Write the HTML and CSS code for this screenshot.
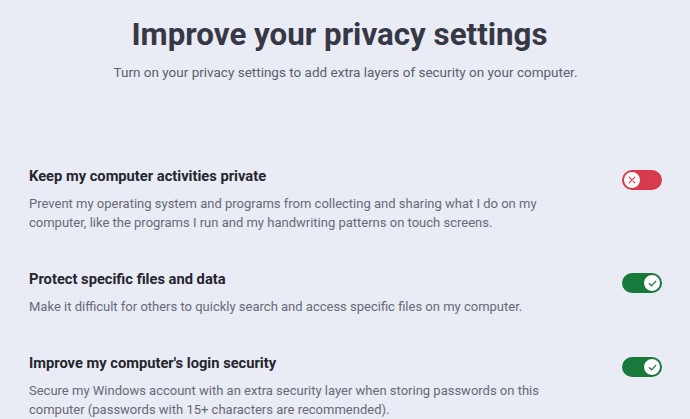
FILE: index.html
```html
<!DOCTYPE html>
<html lang="en">
<head>
<meta charset="utf-8">
<title>Privacy settings</title>
<link rel="stylesheet" href="styles.css">
</head>
<body>
<main class="page">
  <header class="intro">
    <h1 class="title">Improve your privacy settings</h1>
    <p class="subtitle">Turn on your privacy settings to add extra layers of security on your computer.</p>
  </header>
  <section class="settings">
    <div class="setting">
      <div class="setting-text">
        <h2 class="setting-title">Keep my computer activities private</h2>
        <p class="setting-desc">Prevent my operating system and programs from collecting and sharing what I do on my computer, like the programs I run and my handwriting patterns on touch screens.</p>
      </div>
      <span class="toggle toggle-off" role="switch" aria-checked="false">
        <span class="knob">
          <svg viewBox="0 0 10 10" width="8" height="8"><path d="M1.5 1.5 L8.5 8.5 M8.5 1.5 L1.5 8.5" stroke="#d33a4c" stroke-width="1.5" stroke-linecap="round" fill="none"/></svg>
        </span>
      </span>
    </div>
    <div class="setting">
      <div class="setting-text">
        <h2 class="setting-title">Protect specific files and data</h2>
        <p class="setting-desc">Make it difficult for others to quickly search and access specific files on my computer.</p>
      </div>
      <span class="toggle toggle-on" role="switch" aria-checked="true">
        <span class="knob">
          <svg viewBox="0 0 10 10" width="9" height="9"><path d="M1.5 5.2 L4 7.6 L8.6 2.6" stroke="#1a7a3d" stroke-width="1.5" stroke-linecap="round" stroke-linejoin="round" fill="none"/></svg>
        </span>
      </span>
    </div>
    <div class="setting">
      <div class="setting-text">
        <h2 class="setting-title">Improve my computer's login security</h2>
        <p class="setting-desc">Secure my Windows account with an extra security layer when storing passwords on this computer (passwords with 15+ characters are recommended).</p>
      </div>
      <span class="toggle toggle-on" role="switch" aria-checked="true">
        <span class="knob">
          <svg viewBox="0 0 10 10" width="9" height="9"><path d="M1.5 5.2 L4 7.6 L8.6 2.6" stroke="#1a7a3d" stroke-width="1.5" stroke-linecap="round" stroke-linejoin="round" fill="none"/></svg>
        </span>
      </span>
    </div>
  </section>
</main>
</body>
</html>
```
FILE: styles.css
```css
html, body {
  margin: 0;
  padding: 0;
  background: #e9ebf5;
}
body {
  font-family: Roboto, "Liberation Sans", Arial, sans-serif;
  color: #25262d;
}
.page {
  padding: 13px 28px 0 29px;
}
.intro {
  text-align: center;
}
.title {
  margin: 0;
  padding-right: 12px;
  font-size: 31.3px;
  line-height: 44px;
  font-weight: 700;
  color: #363945;
}
.subtitle {
  margin: 5px 0 0;
  font-size: 13.5px;
  line-height: 20px;
  color: #5d606c;
}
.settings {
  margin-top: 84px;
  display: flex;
  flex-direction: column;
  gap: 37px;
}
.setting {
  display: flex;
  align-items: flex-start;
  justify-content: space-between;
  gap: 40px;
}
.setting-text {
  max-width: 515px;
}
.setting-title {
  margin: 0;
  font-size: 14.7px;
  line-height: 20px;
  font-weight: 700;
  color: #25262d;
}
.setting-desc {
  margin: 8px 0 0;
  font-size: 13px;
  line-height: 19px;
  color: #676a75;
}
.toggle {
  flex: none;
  width: 40px;
  height: 20px;
  border-radius: 10px;
  display: flex;
  align-items: center;
  box-sizing: border-box;
  padding: 1px;
  margin-top: 4px;
}
.toggle-off {
  background: #d83a4e;
  justify-content: flex-start;
}
.toggle-on {
  background: #177a3b;
  justify-content: flex-end;
}
.knob {
  width: 18px;
  height: 18px;
  box-sizing: border-box;
  border-radius: 50%;
  background: #ffffff;
  display: flex;
  align-items: center;
  justify-content: center;
}
.toggle-off .knob {
  border: 1px solid #c92f43;
}
.toggle-on .knob {
  border: 1px solid #146c34;
}
```
